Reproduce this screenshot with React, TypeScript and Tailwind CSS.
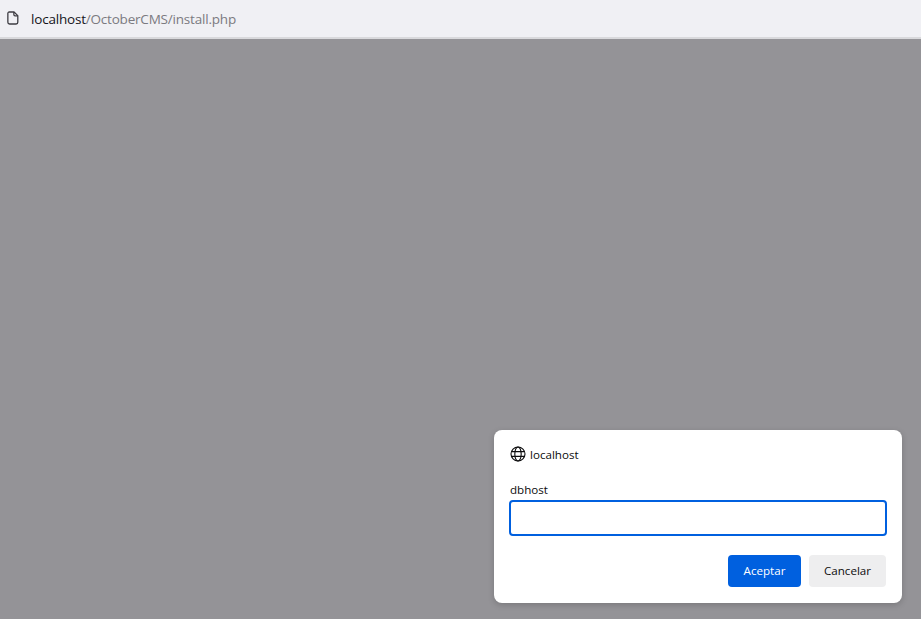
export default function App() {
  return (
    <div className="flex h-[619px] w-full flex-col overflow-hidden bg-[#949397] font-['Open_Sans','Noto_Sans',sans-serif] text-[11.6px] text-[#0c0c0d]">
      {/* Url bar */}
      <header className="flex h-[39px] shrink-0 items-center border-b-2 border-[#d9d9dc] bg-[#f0f0f4] pl-[7px]">
        <svg width="12" height="14" viewBox="0 0 14 16" fill="none" stroke="#3c3b41" strokeWidth="1.5" className="mb-px">
          <path d="M2.6 1h5.6L12.6 5.2V13a2 2 0 0 1-2 2H3a2 2 0 0 1-2-2V2.6A1.6 1.6 0 0 1 2.6 1z" strokeLinejoin="round" />
          <path d="M8 1v3a1.4 1.4 0 0 0 1.4 1.4h3.2" />
        </svg>
        <div className="ml-[12px] mt-px text-[13.5px] tracking-[-0.2px] text-[#7b7a80]">
          <span className="text-[#15141a]">localhost</span>/OctoberCMS/install.php
        </div>
      </header>

      <main className="flex flex-1 items-end justify-end pb-[16px] pr-[19px]">
        {/* Prompt */}
        <div className="flex h-[173px] w-[408px] flex-col rounded-lg bg-white px-4 pt-[15px] shadow-[0_2px_6px_rgba(0,0,0,0.18)]">
          <div className="flex h-[18px] items-center gap-[4px] pl-px">
            <svg width="16" height="16" viewBox="0 0 16 16" fill="none" stroke="#0c0c0d" strokeWidth="1.1" className="-ml-px">
              <circle cx="8" cy="8" r="7" />
              <ellipse cx="8" cy="8" rx="3.2" ry="7" />
              <path d="M1.4 5.6h13.2M1.4 10.4h13.2" />
            </svg>
            <span className="mt-px">localhost</span>
          </div>
          <label htmlFor="dbhost" className="mt-[19px] leading-[16px]">dbhost</label>
          <input
            id="dbhost"
            type="text"
            className="-mx-px mt-[2px] h-[36px] w-[378px] rounded-[4px] border-2 border-[#0060df] bg-white px-2 outline-none"
          />
          <div className="mt-[19px] flex justify-end gap-2">
            <button type="button" className="h-[32px] w-[73px] rounded-[4px] bg-[#0060df] text-white">Aceptar</button>
            <button type="button" className="h-[32px] w-[77px] rounded-[4px] bg-[#eeeeef]">Cancelar</button>
          </div>
        </div>
      </main>
    </div>
  );
}
